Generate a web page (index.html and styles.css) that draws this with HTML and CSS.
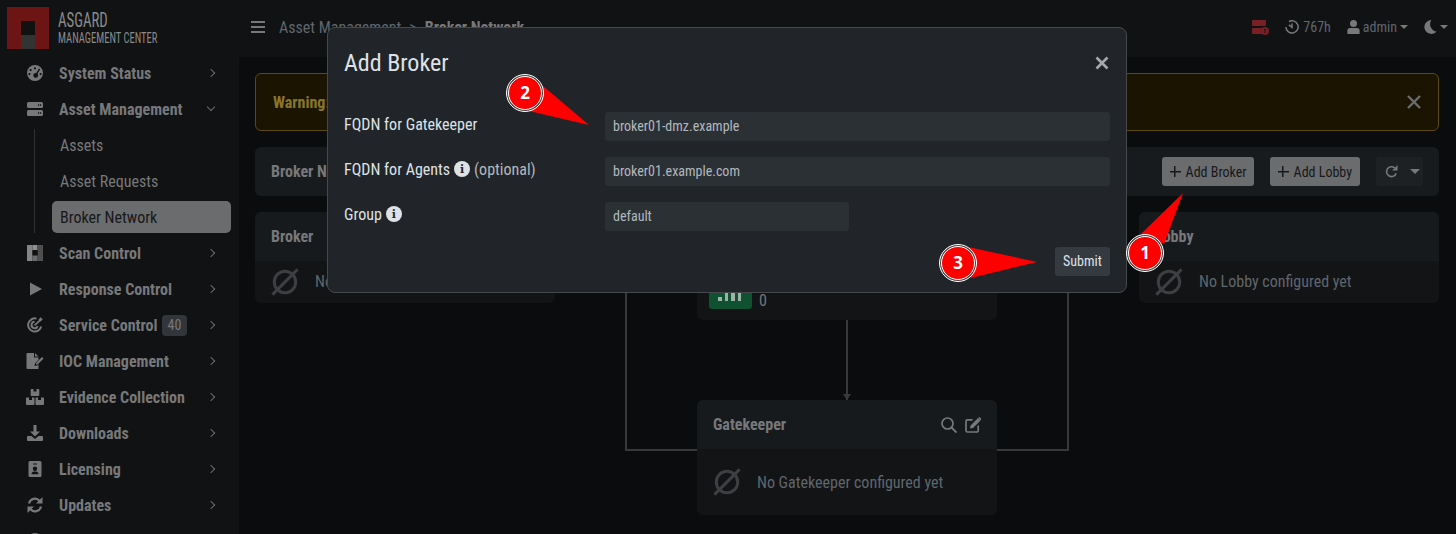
FILE: index.html
```html
<!DOCTYPE html>
<html><head>
<meta charset="utf-8">
<title>Asgard Management Center</title>
<link rel="stylesheet" href="styles.css">
</head><body>
<div class="app">

<aside class="sidebar">
	<div class="brand">
		<div class="logo"><span class="logo-top"></span><span class="logo-bottom"></span></div>
		<div class="brand-text">
			<div class="brand-name">ASGARD</div>
			<div class="brand-sub">MANAGEMENT CENTER</div>
		</div>
	</div>
	<nav>
		<a class="nav-item"><svg class="nav-icon" viewBox="0 0 16 16"><path fill-rule="evenodd" d="M8 0a8 8 0 1 0 0 16A8 8 0 0 0 8 0zM8 2.200a1.100 1.100 0 1 1 0 2.200 1.100 1.100 0 0 1 0-2.200zM3.600 4a1.100 1.100 0 1 1 0 2.200A1.100 1.100 0 0 1 3.600 4zM2.400 8a1.100 1.100 0 1 1 0 2.200 1.100 1.100 0 0 1 0-2.200zM12 3.600l1.200.7-2.700 4.500a2.400 2.400 0 1 1-1.200-.7zM13.600 8a1.100 1.100 0 1 1 0 2.200 1.100 1.100 0 0 1 0-2.200z"/></svg><span class="nav-label">System Status</span><span class="chev"></span></a>
		<a class="nav-item"><svg class="nav-icon" viewBox="0 0 16 14"><path fill-rule="evenodd" d="M1.500 0h13A1.500 1.500 0 0 1 16 1.500v3A1.500 1.500 0 0 1 14.500 6h-13A1.500 1.500 0 0 1 0 4.500v-3A1.500 1.500 0 0 1 1.500 0zM11 2.300v1.400h1.200V2.300zM13 2.300v1.400h1.200V2.300zM1.500 8h13A1.500 1.500 0 0 1 16 9.500v3a1.500 1.500 0 0 1-1.500 1.500h-13A1.500 1.500 0 0 1 0 12.500v-3A1.500 1.500 0 0 1 1.500 8zM11 10.300v1.400h1.200v-1.400zM13 10.300v1.400h1.200v-1.400z"/></svg><span class="nav-label">Asset Management</span><span class="chev open"></span></a>
		<div class="sub-nav">
			<a class="sub-item">Assets</a>
			<a class="sub-item">Asset Requests</a>
			<a class="sub-item active">Broker Network</a>
		</div>
		<a class="nav-item"><svg class="nav-icon" viewBox="0 0 16 16"><rect width="5.500" height="16" fill="#858585"/><rect x="5.500" width="5" height="5.500" fill="#8f8f8f"/><rect x="10.500" width="5.500" height="16" fill="#4f4f4f"/><rect x="5.500" y="5" width="5" height="5.500" fill="#111"/><rect x="5.500" y="10.500" width="5" height="5.500" fill="#6c6c6c"/></svg><span class="nav-label">Scan Control</span><span class="chev"></span></a>
		<a class="nav-item"><svg class="nav-icon" viewBox="0 0 16 16"><path d="M3 1.500l12 6.500-12 6.500z"/></svg><span class="nav-label">Response Control</span><span class="chev"></span></a>
		<a class="nav-item"><svg class="nav-icon" viewBox="0 0 16 16"><path fill="none" stroke="#77787a" stroke-width="2" d="M14.200 9.500A6.600 6.600 0 1 1 9.500 1.600M10.700 9.200A3.200 3.200 0 1 1 7.500 4.800"/><path fill="none" stroke="#77787a" stroke-width="1.700" d="M7.500 8.300L14 2.500"/><path d="M11.500 2.500L14 0l.5 1.500 1.500.5-2.500 2.500z"/></svg><span class="nav-label">Service Control</span><span class="count">40</span><span class="chev"></span></a>
		<a class="nav-item"><svg class="nav-icon wide" viewBox="0 0 18 16"><path d="M1.500 0H8v4.500h4.500v2.300L9 10.500 8.500 13l2.700-.5 1.300-1.200V16h-11a1 1 0 0 1-1-1V1a1 1 0 0 1 1-1zM9 0l3.500 3.500H9z"/><path d="M10.300 9.700L16 4l1.600 1.600-5.700 5.700-2 .4z"/></svg><span class="nav-label">IOC Management</span><span class="chev"></span></a>
		<a class="nav-item"><svg class="nav-icon wide" viewBox="0 0 18 16"><path d="M5.500 0h2v2.500h3V0h2a.8.8 0 0 1 .8.800v5.400a.8.8 0 0 1-.8.8h-7a.8.8 0 0 1-.8-.8V.8A.8.8 0 0 1 5.500 0zM1 8.500h2V11h3V8.500h2a.8.8 0 0 1 .5.800V15a1 1 0 0 1-1 1H1a1 1 0 0 1-1-1V9.300a.8.8 0 0 1 1-.8zM10 8.500h2V11h3V8.500h2a.8.8 0 0 1 1 .8V15a1 1 0 0 1-1 1h-6.500a1 1 0 0 1-1-1V9.300a.8.8 0 0 1 .5-.8z"/></svg><span class="nav-label">Evidence Collection</span><span class="chev"></span></a>
		<a class="nav-item"><svg class="nav-icon" viewBox="0 0 16 16"><path d="M6.500 0h3v6.500H13L8 11.500 3 6.500h3.500zM1 11h3.500L8 14l3.500-3H15a1 1 0 0 1 1 1v3a1 1 0 0 1-1 1H1a1 1 0 0 1-1-1v-3a1 1 0 0 1 1-1z"/></svg><span class="nav-label">Downloads</span><span class="chev"></span></a>
		<a class="nav-item"><svg class="nav-icon" viewBox="0 0 16 16"><path fill-rule="evenodd" d="M3 0h10a1.500 1.500 0 0 1 1.500 1.500v13A1.500 1.500 0 0 1 13 16H3a1.500 1.500 0 0 1-1.500-1.500v-13A1.500 1.500 0 0 1 3 0zM6 2.500v1h4v-1zM8 5.500a2.200 2.200 0 1 0 0 4.400 2.200 2.200 0 0 0 0-4.400zM4.500 13.300h7c0-1.800-1.200-2.800-2.400-2.800H6.900c-1.200 0-2.400 1-2.400 2.800z"/></svg><span class="nav-label">Licensing</span><span class="chev"></span></a>
		<a class="nav-item"><svg class="nav-icon" viewBox="0 0 16 16"><path fill="none" stroke="#77787a" stroke-width="2.200" d="M2 6.500A6 6 0 0 1 12.600 4M14 9.500A6 6 0 0 1 3.400 12"/><path d="M15.500 0v6.500h-6.500zM.5 16V9.500h6.500z"/></svg><span class="nav-label">Updates</span><span class="chev"></span></a>
		<a class="nav-item"><svg class="nav-icon" viewBox="0 0 16 16"><circle cx="8" cy="8" r="8"/></svg></a>
	</nav>
</aside>

<div class="main">
	<header class="topbar">
		<svg class="burger" viewBox="0 0 14 12"><path d="M0 1h14M0 6h14M0 11h14" stroke="#77787a" stroke-width="1.800"/></svg>
		<div class="crumbs">Asset Management<span class="crumb-sep">&gt;</span><b>Broker Network</b></div>
		<div class="top-right">
			<svg class="top-icon server" viewBox="0 0 17 15"><path d="M1 0h12a1 1 0 0 1 1 1v4a1 1 0 0 1-1 1H1a1 1 0 0 1-1-1V1a1 1 0 0 1 1-1zM1 8h9v6H1a1 1 0 0 1-1-1V9a1 1 0 0 1 1-1z" fill="#7a1f26"/><circle cx="13" cy="11" r="4" fill="#7a1f26"/><path d="M13 8.700v2.800M13 12.300v1" stroke="#111214" stroke-width="1.200"/></svg>
			<span class="top-item"><svg class="top-icon clock" viewBox="0 0 16 16"><path fill="none" stroke="#77787a" stroke-width="1.700" d="M4.500 1.800A7 7 0 1 1 1 8M8 4v4.500l-3.500-3"/></svg>767h</span>
			<span class="top-item"><svg class="top-icon user" viewBox="0 0 14 16"><circle cx="7" cy="4" r="4" fill="#77787a"/><path d="M3 9h8a3 3 0 0 1 3 3v4H0v-4a3 3 0 0 1 3-3z" fill="#77787a"/></svg>admin<span class="caret"></span></span>
			<span class="top-item"><svg class="top-icon user" viewBox="0 0 15 16"><path d="M8.500 0A8 8 0 1 0 14.500 13.200 8.500 8.500 0 0 1 8.500 0z" fill="#77787a"/></svg><span class="caret moon-caret"></span></span>
		</div>
	</header>

	<main class="content">
		<div class="alert"><b>Warning:</b><svg class="alert-close" viewBox="0 0 14 14"><path d="M1 1l12 12M13 1L1 13" stroke="#6b6c6e" stroke-width="2.400"/></svg></div>

		<div class="toolbar">
			<b class="toolbar-title">Broker Network</b>
			<div class="toolbar-btns">
				<button class="btn add-broker"><span class="plus"></span>Add Broker</button>
				<button class="btn"><span class="plus"></span>Add Lobby</button>
				<div class="btn-split">
					<svg class="reload" viewBox="0 0 14 14"><path fill="none" stroke="#77787a" stroke-width="1.700" d="M12 9A5.300 5.300 0 1 1 10.500 3.200"/><path d="M13.500 0v5.800H7.700z" fill="#77787a"/></svg>
					<span class="caret wide-caret"></span>
				</div>
			</div>
		</div>

		<div class="diagram">
			<div class="links"></div>
			<section class="card">
				<div class="card-head">Broker</div>
				<div class="card-body"><svg class="none-icon" viewBox="0 0 30 30"><circle cx="15" cy="15" r="11.500" fill="none" stroke="#3d3f43" stroke-width="3.200"/><path d="M1.500 28.500L28.500 1.500" stroke="#3d3f43" stroke-width="3.200"/></svg><span>No Broker configured yet</span></div>
			</section>
			<div class="center-col">
				<section class="card">
					<div class="card-head"></div>
					<div class="agents"><div class="signal"><i class="b1"></i><i class="b2"></i><i class="b3"></i><i class="b4"></i></div><span class="agents-count">0</span></div>
				</section>
				<div class="arrow"></div>
				<section class="card">
					<div class="card-head">Gatekeeper
						<span class="card-tools">
							<svg viewBox="0 0 16 16"><circle cx="6.500" cy="6.500" r="5.500" fill="none" stroke="#77787a" stroke-width="1.700"/><path d="M10.500 10.500L15.500 15.500" stroke="#77787a" stroke-width="1.900"/></svg>
							<svg viewBox="0 0 16 16"><path fill="none" stroke="#77787a" stroke-width="1.700" stroke-linecap="round" d="M7 2.800H2.500A1.500 1.500 0 0 0 1 4.300v9.200A1.500 1.500 0 0 0 2.500 15h9.200a1.500 1.500 0 0 0 1.500-1.500V9"/><path fill="#77787a" d="M5.500 8.500L12.800 1.200l2.500 2.500L8 11l-3 .5zM13.500.5q.8-.8 1.500 0l1 1q.7.8 0 1.500l-.5.5-2.500-2.500z"/></svg>
						</span>
					</div>
					<div class="card-body"><svg class="none-icon" viewBox="0 0 30 30"><circle cx="15" cy="15" r="11.500" fill="none" stroke="#3d3f43" stroke-width="3.200"/><path d="M1.500 28.500L28.500 1.500" stroke="#3d3f43" stroke-width="3.200"/></svg><span>No Gatekeeper configured yet</span></div>
				</section>
			</div>
			<section class="card">
				<div class="card-head">Lobby</div>
				<div class="card-body"><svg class="none-icon" viewBox="0 0 30 30"><circle cx="15" cy="15" r="11.500" fill="none" stroke="#3d3f43" stroke-width="3.200"/><path d="M1.500 28.500L28.500 1.500" stroke="#3d3f43" stroke-width="3.200"/></svg><span>No Lobby configured yet</span></div>
			</section>
		</div>
	</main>
</div>
</div>

<div class="modal">
	<div class="modal-head">
		<h2>Add Broker</h2>
		<span class="modal-close"><svg viewBox="0 0 14 14"><path d="M1.500 1.500l11 11M12.500 1.500l-11 11" stroke="#a8a9ab" stroke-width="2.600"/></svg></span>
	</div>
	<form class="modal-body">
		<div class="form-row">
			<label>FQDN for Gatekeeper</label>
			<input class="field" value="broker01-dmz.example">
		</div>
		<div class="form-row">
			<label>FQDN for Agents <span class="info">i</span> <span class="optional">(optional)</span></label>
			<input class="field" value="broker01.example.com">
		</div>
		<div class="form-row">
			<label>Group <span class="info">i</span></label>
			<input class="field short" value="default">
		</div>
		<div class="form-foot"><button type="button" class="submit">Submit</button></div>
	</form>
</div>

<svg class="marks" width="1456" height="534" viewBox="0 0 1456 534">
	<g class="mark"><path d="M1141 234L1164 244L1183 193z"/><circle class="ring" cx="1145" cy="253" r="18.500"/><circle class="dot" cx="1145" cy="253" r="16.500"/><text x="1145" y="259">1</text></g>
	<g class="mark"><path d="M543 86L529 111L589 125z"/><circle class="ring" cx="525" cy="93" r="18.500"/><circle class="dot" cx="525" cy="93" r="16.500"/><text x="525" y="99">2</text></g>
	<g class="mark"><path d="M968 247L971 278L1037 262z"/><circle class="ring" cx="958" cy="263" r="18.500"/><circle class="dot" cx="958" cy="263" r="16.500"/><text x="958" y="269">3</text></g>
</svg>
</body></html>
```

FILE: styles.css
```css
* {
	box-sizing: border-box;
}

html, body {
	height: 534px;
	margin: 0;
	overflow: hidden;
}

body {
	background-color: #0b0c0e;
	font-family: "Roboto Condensed", Roboto, "Liberation Sans", sans-serif;
	font-stretch: 75%;
	font-size: 16px;
	color: #77787a;
}

.app {
	display: grid;
	grid-template-columns: 239px 1fr;
	height: 534px;
}

/* sidebar */

.sidebar {
	background-color: #111214;
	overflow: hidden;
}

.brand {
	display: flex;
	height: 55px;
	padding: 7px 0 0 7px;
}

.logo {
	width: 42px;
	height: 42px;
	background-color: #6d1414;
	padding: 14px 14px 0;
}

.logo span {
	display: block;
	height: 14px;
}

.logo-top {
	background-color: #111;
}

.logo-bottom {
	background-color: #333;
}

.brand-text {
	margin-left: 9px;
	color: #8a8a8a;
}

.brand-name {
	font-size: 21px;
	line-height: 18px;
	margin-top: 4px;
	transform: scaleX(.705);
	transform-origin: left;
}

.brand-sub {
	font-size: 15.500px;
	line-height: 16px;
	margin-top: 1px;
	transform: scaleX(.68);
	transform-origin: left;
	white-space: nowrap;
}

.nav-item {
	display: flex;
	align-items: center;
	height: 36px;
	padding-left: 27px;
	font-weight: 700;
	color: #77787a;
	position: relative;
}

.nav-icon {
	width: 16px;
	height: 16px;
	fill: #77787a;
	margin-right: 16px;
	flex: none;
}

.nav-icon.wide {
	width: 18px;
	margin-left: -1px;
	margin-right: 15px;
}

.count {
	margin-left: 4px;
	padding: 0 6px;
	height: 21px;
	line-height: 21px;
	border-radius: 4px;
	background-color: #32363b;
	font-size: 14px;
	font-weight: 400;
}

.chev {
	position: absolute;
	left: 208px;
	top: 15px;
	width: 6px;
	height: 6px;
	border-top: 1px solid #6a6b6d;
	border-right: 1px solid #6a6b6d;
	transform: rotate(45deg);
}

.chev.open {
	top: 13px;
	transform: rotate(135deg);
}

.sub-nav {
	display: flex;
	flex-direction: column;
	gap: 4px;
	width: 197px;
	margin: 2px 0 2px 34px;
	padding-left: 17px;
	border-left: 1px solid #2e2f31;
}

.sub-item {
	display: flex;
	align-items: center;
	height: 32px;
	padding-left: 8px;
	color: #77787a;
}

.sub-item.active {
	border-radius: 5px;
	background-color: #6b6c6e;
	color: #17181a;
}

/* top bar */

.main {
	min-width: 0;
}

.topbar {
	display: flex;
	align-items: center;
	height: 57px;
	padding: 0 8px 3px 12px;
	background-color: #111214;
}

.burger {
	width: 14px;
	height: 12px;
	margin-right: 14px;
}

.crumbs {
	color: #5f666d;
}

.crumb-sep {
	margin: 0 8px;
}

.crumbs b {
	color: #77787a;
}

.top-right {
	display: flex;
	align-items: center;
	gap: 16px;
	margin-left: auto;
	font-size: 14px;
	color: #5f666d;
}

.top-item {
	display: flex;
	align-items: center;
}

.top-icon {
	width: 14px;
	height: 14px;
	margin-right: 4px;
}

.top-icon.server {
	width: 17px;
	height: 15px;
	margin: 0;
}

.top-icon.user {
	width: 13px;
	margin-right: 3px;
}

.caret {
	display: inline-block;
	width: 0;
	height: 0;
	margin-left: 3px;
	border-top: 4px solid #77787a;
	border-left: 4px solid transparent;
	border-right: 4px solid transparent;
}

.moon-caret {
	margin-left: 0;
}

.wide-caret {
	border-top-width: 5px;
	border-left-width: 5px;
	border-right-width: 5px;
}

/* content */

.content {
	padding: 16px 17px 0 16px;
}

.alert {
	display: flex;
	align-items: center;
	justify-content: space-between;
	height: 58px;
	padding: 0 17px;
	border: 1px solid #5c4a0a;
	border-radius: 6px;
	background-color: #1a1400;
	color: #8a7628;
}

.alert-close {
	width: 14px;
	height: 14px;
}

.toolbar {
	display: flex;
	align-items: center;
	justify-content: space-between;
	height: 49px;
	margin-top: 16px;
	padding: 0 16px;
	border-radius: 6px;
	background-color: #181b1e;
}

.toolbar-btns {
	display: flex;
	align-items: center;
}

.btn {
	display: flex;
	align-items: center;
	height: 29px;
	margin-left: 16px;
	padding: 0 8px;
	border: none;
	border-radius: 3px;
	background-color: #6b6c6e;
	color: #17181a;
	font: inherit;
	font-size: 14px;
}

.btn.add-broker {
	padding-right: 7px;
}

.plus {
	width: 11px;
	height: 11px;
	margin-right: 5px;
	background:
		linear-gradient(#17181a, #17181a) center / 100% 1.500px no-repeat,
		linear-gradient(#17181a, #17181a) center / 1.500px 100% no-repeat;
}

.btn-split {
	display: flex;
	align-items: center;
	justify-content: space-between;
	width: 47px;
	height: 29px;
	margin-left: 16px;
	padding: 0 3px 0 9px;
	border-radius: 3px;
	background-color: #1e2124;
}

.reload {
	width: 13px;
	height: 13px;
}

.diagram {
	display: grid;
	grid-template-columns: 300px 300px 300px;
	justify-content: space-between;
	align-items: start;
	margin-top: 16px;
	position: relative;
}

.links {
	position: absolute;
	left: 370px;
	top: 0;
	width: 444px;
	height: 239px;
	border: 2px solid #38393b;
	border-top: none;
}

.card {
	position: relative;
	border-radius: 6px;
	background-color: #131416;
	overflow: hidden;
}

.card-head {
	display: flex;
	align-items: center;
	justify-content: space-between;
	height: 49px;
	padding: 0 16px;
	background-color: #171a1d;
	font-weight: 700;
}

.card-body {
	display: flex;
	align-items: center;
	height: 42px;
	padding: 0 16px 1px;
	color: #5f666d;
}

.center-col .card-body {
	height: 66px;
	padding-bottom: 0;
}

.none-icon {
	width: 28px;
	height: 28px;
	margin-right: 16px;
}

.card-tools {
	display: flex;
	gap: 8px;
}

.card-tools svg {
	width: 16px;
	height: 16px;
}

.agents {
	display: flex;
	align-items: flex-end;
	height: 59px;
	padding: 0 12px 11px;
}

.signal {
	display: flex;
	align-items: flex-end;
	gap: 3px;
	width: 43px;
	height: 29px;
	padding: 0 9px 8px;
	border-radius: 3px;
	background-color: #0f5130;
}

.signal i {
	width: 3.500px;
	background-color: #9fb2a7;
}

.b1 {
	height: 4px;
}

.b2 {
	height: 8px;
}

.b3 {
	height: 9px;
}

.b4 {
	height: 9px;
}

.agents-count {
	margin-left: 7px;
	margin-bottom: -2px;
	line-height: 20px;
}

.arrow {
	position: relative;
	width: 2px;
	height: 80px;
	margin: 0 auto;
	background-color: #38393b;
}

.arrow::after {
	content: "";
	position: absolute;
	bottom: 0;
	left: -3px;
	border-top: 6px solid #38393b;
	border-left: 4px solid transparent;
	border-right: 4px solid transparent;
}

/* modal */

.modal {
	position: absolute;
	left: 327px;
	top: 27px;
	width: 800px;
	height: 266px;
	border: 1px solid #46484b;
	border-radius: 8px;
	background-color: #212529;
	color: #dee2e6;
}

.modal-head {
	display: flex;
	align-items: center;
	justify-content: space-between;
	height: 69px;
	padding: 0 17px 0 16px;
}

.modal-head h2 {
	margin: 0;
	font-size: 24px;
	font-weight: 400;
}

.modal-close {
	display: flex;
}

.modal-close svg {
	width: 14px;
	height: 14px;
}

.modal-body {
	padding: 15px 16px 0;
}

.form-row {
	display: grid;
	grid-template-columns: 261px 505px;
	align-items: center;
	height: 29px;
	margin-bottom: 16px;
}

.form-row label {
	display: flex;
	align-items: center;
	gap: 4px;
	margin-top: -5px;
}

.optional {
	color: #b4b8bc;
}

.info {
	display: inline-flex;
	align-items: center;
	justify-content: center;
	width: 16px;
	height: 16px;
	border-radius: 50%;
	background-color: #dee2e6;
	color: #212529;
	font-family: "DejaVu Serif", serif;
	font-stretch: normal;
	font-size: 11px;
	font-weight: 700;
}

.field {
	width: 100%;
	height: 29px;
	padding: 0 8px 2px;
	border: none;
	border-radius: 3px;
	background-color: #2b3035;
	color: #b4b8bc;
	font: inherit;
	font-size: 14px;
}

.field.short {
	width: 244px;
}

.form-foot {
	display: flex;
	justify-content: flex-end;
}

.submit {
	width: 55px;
	height: 29px;
	padding: 0 0 2px;
	border: none;
	border-radius: 3px;
	background-color: #343a40;
	color: #dee2e6;
	font: inherit;
	font-size: 14px;
}

/* numbered marks */

.marks {
	position: absolute;
	left: 0;
	top: 0;
}

.mark path {
	fill: #ff0000;
}

.ring {
	fill: #444;
	stroke: #fff;
	stroke-width: 1;
}

.dot {
	fill: #ff0000;
	stroke: #fff;
	stroke-width: 1;
}

.mark text {
	fill: #fff;
	font-family: "Open Sans", sans-serif;
	font-stretch: normal;
	font-size: 17px;
	font-weight: 700;
	text-anchor: middle;
}
```
